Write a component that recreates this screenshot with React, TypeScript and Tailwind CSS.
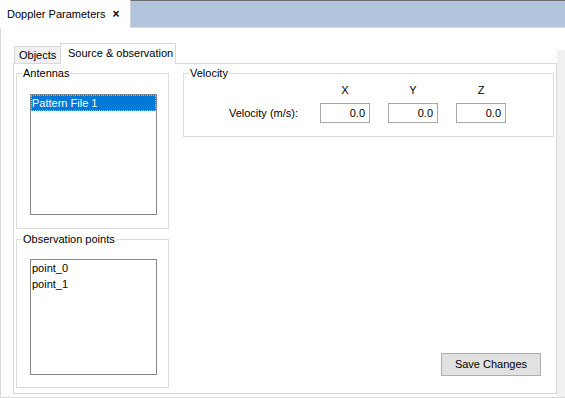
function GroupBox({
  title,
  className,
  children,
}: {
  title: string;
  className?: string;
  children: React.ReactNode;
}) {
  return (
    <div className={`relative border border-[#dcdcdc] ${className ?? ""}`}>
      <span className="absolute -top-[8px] left-[5px] bg-white px-px leading-[14px]">
        {title}
      </span>
      {children}
    </div>
  );
}

function ListBox({ items, selected, className }: { items: string[]; selected?: number; className?: string }) {
  return (
    <div className={`border border-[#828790] bg-white ${className ?? ""}`}>
      {items.map((item, i) =>
        i === selected ? (
          <div
            key={item}
            className="h-[16px] bg-[#0078d7] text-white leading-[14px] border border-dotted border-[#f5b04a] pl-0"
          >
            {item}
          </div>
        ) : (
          <div key={item} className="h-[16px] leading-[16px] pl-px">
            {item}
          </div>
        )
      )}
    </div>
  );
}

function NumField({ value }: { value: string }) {
  return (
    <div className="h-[20px] border border-[#a8a8a8] bg-white text-right pr-[4px] leading-[18px]">{value}</div>
  );
}

export default function App() {
  return (
    <div className="w-[565px] h-[398px] bg-white overflow-hidden text-[11px] text-black font-['Liberation_Sans',Arial,sans-serif]">
      {/* document tab strip */}
      <div className="flex h-[28px]">
        <div className="w-[130px] bg-white flex items-center pl-[7px] text-[11px]">
          <span>Doppler Parameters</span>
          <span className="ml-[7px] font-bold text-[12px] leading-none">×</span>
        </div>
        <div className="flex-1 bg-[#b0c4de] border-t border-[#6b6b6b] border-l border-l-[#d3d3d3] border-b border-b-[#dcdcdc]" />
      </div>

      <div className="flex h-[370px] border-l border-b border-[#dadada]">
        <div className="w-[556px] pl-[12px] pt-[15px]">
          {/* tabs */}
          <div className="flex items-end h-[20px] pl-px">
            <div className="h-[17px] w-[46px] bg-[#f0f0f0] border-l border-t border-[#d9d9d9] pl-[4px] leading-[17px]">
              Objects
            </div>
            <div className="relative z-10 h-[21px] w-[116px] -mb-px bg-white border-x border-t border-[#d9d9d9] pl-[7px] leading-[19px]">
              Source &amp; observation
            </div>
          </div>

          {/* tab page */}
          <div className="w-[544px] h-[331px] border border-[#d9d9d9] flex gap-[14px] pl-[2px] pr-[2px] pt-[9px] pb-[5px]">
            <div className="w-[153px] flex flex-col gap-[10px]">
              <GroupBox title="Antennas" className="h-[156px] pl-[13px] pt-[20px]">
                <ListBox items={["Pattern File 1"]} selected={0} className="w-[127px] h-[121px]" />
              </GroupBox>
              <GroupBox title="Observation points" className="h-[149px] pl-[13px] pt-[19px]">
                <ListBox items={["point_0", "point_1"]} className="w-[127px] h-[116px]" />
              </GroupBox>
            </div>

            <div className="flex-1 flex flex-col">
              <GroupBox title="Velocity" className="h-[64px] pt-[9px]">
                <div className="grid grid-cols-[118px_50px_50px_50px] gap-x-[18px] gap-y-[6px] items-center">
                  <div />
                  <div className="text-center leading-[14px]">X</div>
                  <div className="text-center leading-[14px]">Y</div>
                  <div className="text-center leading-[14px]">Z</div>
                  <div className="text-right pr-[4px]">Velocity (m/s):</div>
                  <NumField value="0.0" />
                  <NumField value="0.0" />
                  <NumField value="0.0" />
                </div>
              </GroupBox>
              <div className="flex-1" />
              <div className="flex justify-end pr-[13px] pb-[12px]">
                <button className="w-[100px] h-[23px] bg-[#e1e1e1] border border-[#adadad] text-[11px]">
                  Save Changes
                </button>
              </div>
            </div>
          </div>
        </div>
        <div className="flex-1 bg-[#f0f0f0] mt-[22px]" />
      </div>
    </div>
  );
}
